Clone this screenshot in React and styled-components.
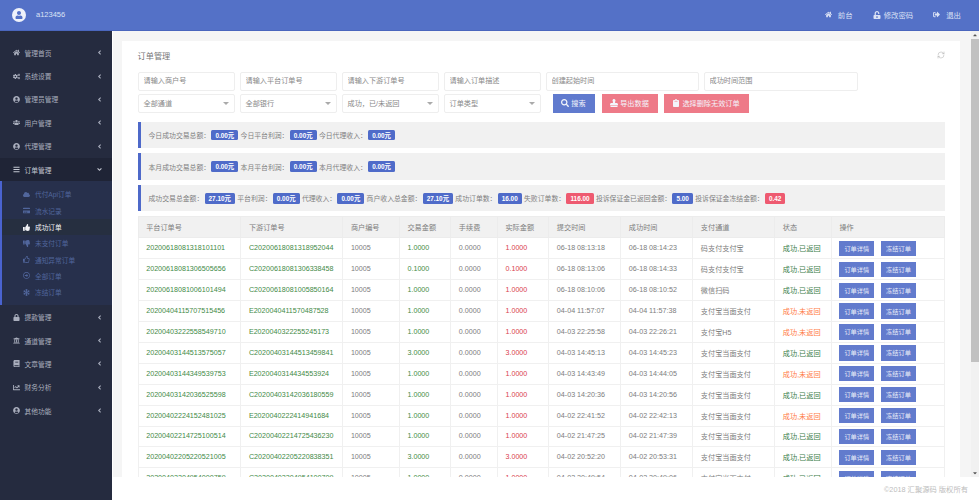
import React from "react";
import styled, { createGlobalStyle } from "styled-components";
import {
  FaAngleDown,
  FaAngleLeft,
  FaBars,
  FaBook,
  FaCaretDown,
  FaCaretUp,
  FaChartLine,
  FaClipboard,
  FaCloud,
  FaCogs,
  FaCreditCard,
  FaHome,
  FaLock,
  FaRegArrowAltCircleRight,
  FaRegThumbsUp,
  FaSearch,
  FaSignOutAlt,
  FaSnowflake,
  FaStamp,
  FaThumbsDown,
  FaThumbsUp,
  FaUniversity,
  FaUnlockAlt,
  FaUser,
  FaUserCircle,
  FaUsers,
} from "react-icons/fa";
import { RefreshCw } from "lucide-react";

const GlobalStyle = createGlobalStyle`
  html, body {
    margin: 0;
    padding: 0;
    height: 100%;
    overflow: hidden;
    background: #fff;
    font-family: "Liberation Sans", "Noto Sans CJK SC", sans-serif;
  }
  * {
    box-sizing: border-box;
  }
`;

const Page = styled.div`
  width: 979px;
  height: 500px;
  display: flex;
  flex-direction: column;
  overflow: hidden;
`;

const Header = styled.header`
  height: 31px;
  flex: none;
  display: flex;
  align-items: center;
  padding: 0 18px 1px 12px;
  background: #5471c7;
  border-bottom: 1px solid #4a66bd;
  color: #dbe2f5;
  font-size: 7.4px;
`;

const Avatar = styled.div`
  width: 14px;
  height: 14px;
  border-radius: 50%;
  background: #eef1fa;
  display: flex;
  align-items: center;
  justify-content: center;
  color: #5471c7;
  margin-right: 10px;
`;

const UserName = styled.span`
  font-size: 7.5px;
  margin-right: auto;
`;

const HeadLink = styled.a`
  display: flex;
  align-items: center;
  gap: ${(p) => p.$gap || 6}px;
  margin-left: ${(p) => p.$left || 20}px;
  color: #dbe2f5;
`;

const Body = styled.div`
  flex: 1;
  min-height: 0;
  display: flex;
`;

const Sidebar = styled.nav`
  width: 112px;
  flex: none;
  padding-top: 10px;
  background: #252b3f;
  color: #a9aebd;
  font-size: 6.75px;
`;

const NavItem = styled.div`
  height: 23.4px;
  display: flex;
  align-items: center;
  gap: 5px;
  padding: 0 9px 0 12.5px;
  background: ${(p) => (p.$open ? "#1f2436" : "transparent")};
  color: ${(p) => (p.$open ? "#c3c7d2" : "#a9aebd")};
`;

const NavLabel = styled.span`
  flex: 1;
`;

const SubNav = styled.div`
  padding: 5px 0;
  background: #27304c;
  border-left: 2px solid #4a63d0;
`;

const SubItem = styled.div`
  height: 16.3px;
  display: flex;
  align-items: center;
  gap: 5px;
  padding-left: 21px;
  font-size: 6.7px;
  color: ${(p) => (p.$active ? "#f2f3f6" : "#51669c")};
  background: ${(p) => (p.$active ? "#262f40" : "transparent")};
`;

const Main = styled.main`
  flex: 1;
  min-width: 0;
  display: flex;
  flex-direction: column;
  border-left: 1px solid #fff;
`;

const Viewport = styled.div`
  height: 446px;
  flex: none;
  display: flex;
  background: #f5f5f5;
`;

const ScrollArea = styled.div`
  flex: 1;
  min-width: 0;
  overflow: hidden;
  padding: 10px 11px 0 9px;
`;

const ScrollTrack = styled.div`
  width: 8px;
  flex: none;
  display: flex;
  flex-direction: column;
  align-items: center;
  background: #f1f1f1;
  color: #555;
`;

const ScrollThumb = styled.div`
  width: 100%;
  height: 323px;
  background: #c1c1c1;
`;

const ArrowSlot = styled.div`
  height: 8px;
  flex: none;
  display: flex;
  align-items: center;
  justify-content: center;
  margin-top: ${(p) => (p.$end ? "auto" : "0")};
`;

const Card = styled.section`
  background: #fff;
  padding: 7px 15px 0 15.5px;
`;

const TitleRow = styled.div`
  height: 14px;
  display: flex;
  align-items: center;
  justify-content: space-between;
  margin-bottom: 9.5px;
  color: #777;
  font-size: 8.2px;
`;

const FilterRow = styled.div`
  display: flex;
  gap: 5px;
  margin-bottom: 2.6px;
`;

const Field = styled.input`
  width: ${(p) => p.$w || 97}px;
  height: 19.5px;
  padding: 0 5px;
  border: 1px solid #eee;
  border-radius: 2px;
  outline: none;
  background: #fff;
  font: 7.15px "Liberation Sans", "Noto Sans CJK SC", sans-serif;
  &::placeholder {
    color: #888;
    opacity: 1;
  }
`;

const Select = styled.div`
  width: 97px;
  height: 19.5px;
  display: flex;
  align-items: center;
  justify-content: space-between;
  padding: 0 5px;
  border: 1px solid #eee;
  border-radius: 2px;
  color: #888;
  font-size: 7.15px;
  &::after {
    content: "";
    border-top: 3px solid #aaa;
    border-left: 3px solid transparent;
    border-right: 3px solid transparent;
  }
`;

const Button = styled.button`
  width: ${(p) => p.$w}px;
  height: 19.5px;
  margin-left: ${(p) => p.$left}px;
  display: flex;
  align-items: center;
  justify-content: center;
  gap: 2px;
  padding: 0;
  border: 0;
  background: ${(p) => (p.$danger ? "#ee7a88" : "#607ace")};
  color: #f3f5fb;
  font: 7.15px "Liberation Sans", "Noto Sans CJK SC", sans-serif;
`;

const Alert = styled.div`
  height: 26.3px;
  display: flex;
  align-items: center;
  margin-top: ${(p) => p.$top}px;
  padding-left: 8px;
  border-left: 3px solid #4e69c9;
  background: #f1f1f1;
  color: #808080;
  font-size: 6.85px;
  white-space: nowrap;
`;

const Tag = styled.span`
  height: 10.4px;
  display: inline-flex;
  align-items: center;
  margin: 0 2.3px 0 1.3px;
  padding: 0 4px;
  border-radius: 1.5px;
  background: ${(p) => (p.$red ? "#ee5a70" : "#4f6bc9")};
  color: #fff;
  font-size: 6.4px;
  font-weight: 700;
`;

const Table = styled.table`
  width: 807px;
  margin-top: 5px;
  table-layout: fixed;
  border-collapse: collapse;
  border: 1px solid #ececec;
  font-size: 7.15px;
  color: #7d7d7d;
`;

const Th = styled.th`
  height: 21px;
  padding: 0 0 0 7.7px;
  border: 1px solid #ececec;
  background: #f1f1f1;
  font-weight: 400;
  text-align: left;
  white-space: nowrap;
`;

const Td = styled.td`
  height: 20.9px;
  padding: 0 0 0 7.7px;
  border: 1px solid #f0f0f0;
  white-space: nowrap;
  color: ${(p) => p.$color || "#7d7d7d"};
`;

const Actions = styled.div`
  display: flex;
  gap: 7px;
`;

const RowButton = styled.button`
  width: 34.7px;
  height: 15.4px;
  padding: 0;
  border: 0;
  background: #627bcd;
  color: #e8ecf8;
  font: 6.2px "Liberation Sans", "Noto Sans CJK SC", sans-serif;
`;

const Footer = styled.footer`
  flex: 1;
  display: flex;
  align-items: center;
  justify-content: flex-end;
  padding-right: 11px;
  background: #fff;
  color: #bdbdbd;
  font-size: 7.3px;
`;

const navTop = [
  [FaHome, "管理首页"],
  [FaCogs, "系统设置"],
  [FaUserCircle, "管理员管理"],
  [FaUsers, "用户管理"],
  [FaUserCircle, "代理管理"],
];

const navSub = [
  [FaCloud, "代付Api订单"],
  [FaCreditCard, "流水记录"],
  [FaThumbsUp, "成功订单", true],
  [FaThumbsDown, "未支付订单"],
  [FaRegThumbsUp, "通知异常订单"],
  [FaRegArrowAltCircleRight, "全部订单"],
  [FaSnowflake, "冻结订单"],
];

const navBottom = [
  [FaLock, "提款管理"],
  [FaUniversity, "通道管理"],
  [FaBook, "文章管理"],
  [FaChartLine, "财务分析"],
  [FaUserCircle, "其他功能"],
];

const columns = [
  ["平台订单号", 102.7],
  ["下游订单号", 102],
  ["商户编号", 56.6],
  ["交易金额", 51.4],
  ["手续费", 46.6],
  ["实际金额", 51.4],
  ["提交时间", 72],
  ["成功时间", 72],
  ["支付通道", 82],
  ["状态", 56.6],
  ["操作", 113.4],
];

const face = "支付宝当面支付";
const orders = [
  ["20200618081318101101", "C20200618081318952044", "1.0000", "06-18 08:13:18", "06-18 08:14:23", "码支付支付宝", true],
  ["20200618081306505656", "C20200618081306338458", "0.1000", "06-18 08:13:06", "06-18 08:14:33", "码支付支付宝", true],
  ["20200618081006101494", "C20200618081005850164", "1.0000", "06-18 08:10:06", "06-18 08:10:52", "微信扫码", true],
  ["20200404115707515456", "E2020040411570487528", "1.0000", "04-04 11:57:07", "04-04 11:57:38", face, false],
  ["20200403222558549710", "E2020040322255245173", "1.0000", "04-03 22:25:58", "04-03 22:26:21", "支付宝H5", false],
  ["20200403144513575057", "C20200403144513459841", "3.0000", "04-03 14:45:13", "04-03 14:45:23", face, true],
  ["20200403144349539753", "E2020040314434553924", "1.0000", "04-03 14:43:49", "04-03 14:44:05", face, false],
  ["20200403142036525598", "C20200403142036180559", "1.0000", "04-03 14:20:36", "04-03 14:20:56", face, true],
  ["20200402224152481025", "E2020040222414941684", "1.0000", "04-02 22:41:52", "04-02 22:42:13", face, false],
  ["20200402214725100514", "C20200402214725436230", "1.0000", "04-02 21:47:25", "04-02 21:47:39", face, true],
  ["20200402205220521005", "C20200402205220838351", "3.0000", "04-02 20:52:20", "04-02 20:53:31", face, true],
  ["20200402204954000759", "C20200402204954100709", "1.0000", "04-02 20:49:54", "04-02 20:49:06", face, true],
];

export default function App() {
  return (
    <Page>
      <GlobalStyle />
      <Header>
        <Avatar>
          <FaUser size={8} />
        </Avatar>
        <UserName>a123456</UserName>
        <HeadLink>
          <FaHome size={7} />
          前台
        </HeadLink>
        <HeadLink $gap={3}>
          <FaUnlockAlt size={8} />
          修改密码
        </HeadLink>
        <HeadLink>
          <FaSignOutAlt size={7} />
          退出
        </HeadLink>
      </Header>
      <Body>
        <Sidebar>
          {navTop.map(([Icon, label]) => (
            <NavItem key={label}>
              <Icon size={7} />
              <NavLabel>{label}</NavLabel>
              <FaAngleLeft size={7} />
            </NavItem>
          ))}
          <NavItem $open>
            <FaBars size={7} />
            <NavLabel>订单管理</NavLabel>
            <FaAngleDown size={7} />
          </NavItem>
          <SubNav>
            {navSub.map(([Icon, label, active]) => (
              <SubItem key={label} $active={active}>
                <Icon size={7} />
                {label}
              </SubItem>
            ))}
          </SubNav>
          {navBottom.map(([Icon, label]) => (
            <NavItem key={label}>
              <Icon size={7} />
              <NavLabel>{label}</NavLabel>
              <FaAngleLeft size={7} />
            </NavItem>
          ))}
        </Sidebar>
        <Main>
          <Viewport>
            <ScrollArea>
              <Card>
                <TitleRow>
                  订单管理
                  <RefreshCw size={8} color="#aaa" strokeWidth={1.5} />
                </TitleRow>
                <FilterRow>
                  <Field placeholder="请输入商户号" />
                  <Field placeholder="请输入平台订单号" />
                  <Field placeholder="请输入下游订单号" />
                  <Field placeholder="请输入订单描述" />
                  <Field $w={153} placeholder="创建起始时间" />
                  <Field $w={154} placeholder="成功时间范围" />
                </FilterRow>
                <FilterRow>
                  <Select>全部通道</Select>
                  <Select>全部银行</Select>
                  <Select>成功，已/未返回</Select>
                  <Select>订单类型</Select>
                  <Button $w={42} $left={7}>
                    <FaSearch size={8} />
                    搜索
                  </Button>
                  <Button $w={56} $left={2} $danger>
                    <FaStamp size={8} />
                    导出数据
                  </Button>
                  <Button $w={85} $left={1} $danger>
                    <FaClipboard size={8} />
                    选择删除无效订单
                  </Button>
                </FilterRow>
                <Alert $top={9}>
                  今日成功交易总额：<Tag>0.00元</Tag>今日平台利润：<Tag>0.00元</Tag>今日代理收入：<Tag>0.00元</Tag>
                </Alert>
                <Alert $top={5}>
                  本月成功交易总额：<Tag>0.00元</Tag>本月平台利润：<Tag>0.00元</Tag>本月代理收入：<Tag>0.00元</Tag>
                </Alert>
                <Alert $top={5.5}>
                  成功交易总金额：<Tag>27.10元</Tag>平台利润：<Tag>0.00元</Tag>代理收入：<Tag>0.00元</Tag>商户收入总金额：
                  <Tag>27.10元</Tag>成功订单数：<Tag>16.00</Tag>失败订单数：<Tag $red>116.00</Tag>投诉保证金已返回金额：
                  <Tag>5.00</Tag>投诉保证金冻结金额：<Tag $red>0.42</Tag>
                </Alert>
                <Table>
                  <colgroup>
                    {columns.map(([label, width]) => (
                      <col key={label} width={width} />
                    ))}
                  </colgroup>
                  <thead>
                    <tr>
                      {columns.map(([label]) => (
                        <Th key={label}>{label}</Th>
                      ))}
                    </tr>
                  </thead>
                  <tbody>
                    {orders.map((o) => (
                      <tr key={o[0]}>
                        <Td $color="#3f8a48">{o[0]}</Td>
                        <Td $color="#3f8a48">{o[1]}</Td>
                        <Td>10005</Td>
                        <Td $color="#3f8a48">{o[2]}</Td>
                        <Td>0.0000</Td>
                        <Td $color="#d9404f">{o[2]}</Td>
                        <Td>{o[3]}</Td>
                        <Td>{o[4]}</Td>
                        <Td>{o[5]}</Td>
                        <Td $color={o[6] ? "#3a7d4a" : "#ff7a45"}>{o[6] ? "成功,已返回" : "成功,未返回"}</Td>
                        <Td>
                          <Actions>
                            <RowButton>订单详情</RowButton>
                            <RowButton>冻结订单</RowButton>
                          </Actions>
                        </Td>
                      </tr>
                    ))}
                  </tbody>
                </Table>
              </Card>
            </ScrollArea>
            <ScrollTrack>
              <ArrowSlot>
                <FaCaretUp size={6} />
              </ArrowSlot>
              <ScrollThumb />
              <ArrowSlot $end>
                <FaCaretDown size={6} />
              </ArrowSlot>
            </ScrollTrack>
          </Viewport>
          <Footer>©2018 汇聚源码 版权所有</Footer>
        </Main>
      </Body>
    </Page>
  );
}
